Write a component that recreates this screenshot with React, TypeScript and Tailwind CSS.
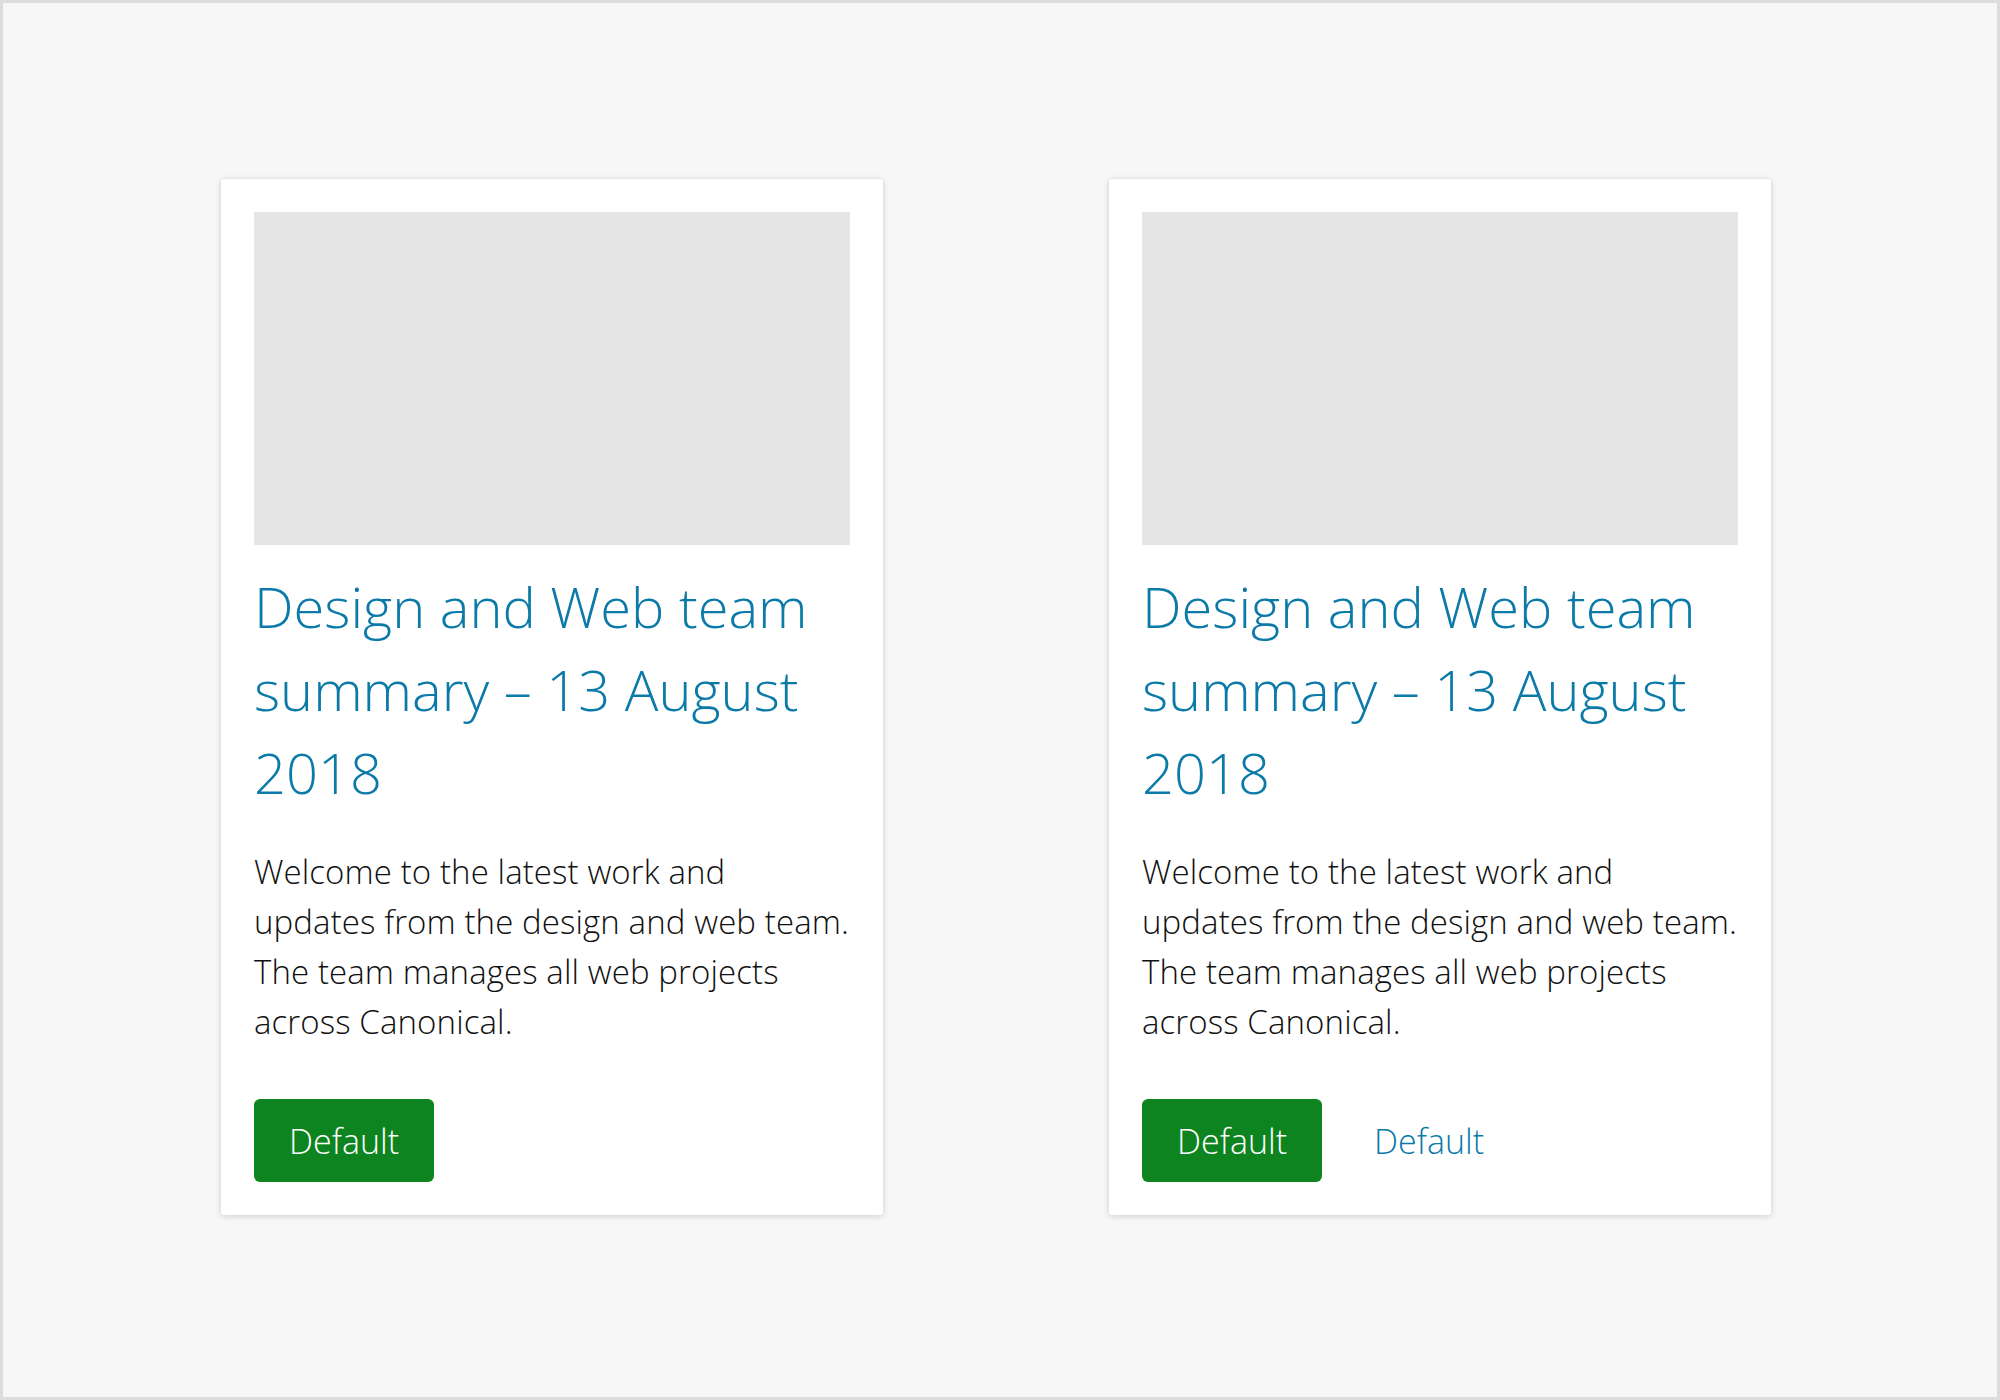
import React from "react";

const bodyLines = [
  "Welcome to the latest work and",
  "updates from the design and web team.",
  "The team manages all web projects",
  "across Canonical.",
];

function Card({ withLink }: { withLink?: boolean }) {
  return (
    <div className="w-[662px] bg-white rounded-[3px] shadow-[0_1px_6px_rgba(0,0,0,0.18)] p-[33px] flex flex-col">
      <div className="w-full h-[333px] bg-[#e5e5e5]" />
      <h3 className="mt-[20px] text-[56px] leading-[83px] font-light text-[#0b7aa8]">
        Design and Web team summary – 13 August 2018
      </h3>
      <p className="mt-[33px] text-[33px] leading-[50px] font-light text-[#111111] tracking-[0.1px]">
        {bodyLines.map((l, i) => (
          <span key={i} className="block whitespace-nowrap">
            {l}
          </span>
        ))}
      </p>
      <div className="mt-[52px] flex items-center gap-[18px]">
        <button className="h-[83px] px-[35px] rounded-[6px] bg-[#0e8420] text-white text-[34px] font-light leading-none">
          Default
        </button>
        {withLink && (
          <a className="h-[83px] px-[34px] flex items-center text-[34px] font-light text-[#0b7aa8] leading-none">
            Default
          </a>
        )}
      </div>
    </div>
  );
}

export default function App() {
  return (
    <div
      className="w-[2000px] h-[1400px] bg-[#f7f7f7] border-[3px] border-[#dddddd] pt-[176px] pl-[218px] flex items-start gap-[226px]"
      style={{ fontFamily: '"Open Sans", sans-serif' }}
    >
      <Card />
      <Card withLink />
    </div>
  );
}
